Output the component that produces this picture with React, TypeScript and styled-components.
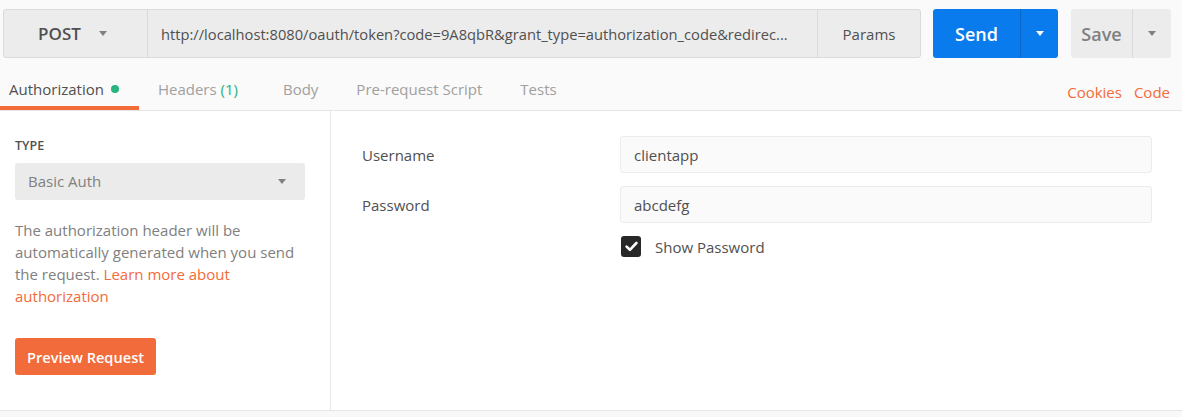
import React from "react";
import styled, { createGlobalStyle } from "styled-components";

const GlobalStyle = createGlobalStyle`
  html, body {
    margin: 0;
    padding: 0;
    background: #fafafa;
    font-family: "Open Sans", "Noto Sans", sans-serif;
    color: #505050;
  }
  * { box-sizing: border-box; }
`;

const Page = styled.div`
  width: 1182px;
  height: 417px;
  background: #fafafa;
  overflow: hidden;
`;

const RequestRow = styled.div`
  display: flex;
  align-items: stretch;
  height: 58px;
  padding: 9px 11px 0 3px;
`;

const UrlGroup = styled.div`
  display: flex;
  flex: 1;
  height: 49px;
  border: 1px solid #dadada;
  border-radius: 3px;
  background: #ececec;
  overflow: hidden;
`;

const Method = styled.div`
  width: 144px;
  display: flex;
  align-items: center;
  justify-content: center;
  gap: 18px;
  font-size: 17px;
  font-weight: 600;
  color: #505050;
  border-right: 1px solid #dadada;
  padding-right: 6px;
`;

const Caret = styled.span<{ $color?: string }>`
  display: inline-block;
  width: 0;
  height: 0;
  border-left: 4.5px solid transparent;
  border-right: 4.5px solid transparent;
  border-top: 5.5px solid ${(p) => p.$color ?? "#808080"};
`;

const UrlText = styled.div`
  flex: 1;
  display: flex;
  align-items: center;
  padding-left: 13px;
  font-size: 14.7px;
  color: #505050;
  white-space: nowrap;
  overflow: hidden;
  border-right: 1px solid #dadada;
`;

const Params = styled.div`
  width: 102px;
  display: flex;
  align-items: center;
  justify-content: center;
  font-size: 15px;
  color: #505050;
`;

const SplitButton = styled.div<{ $bg: string; $divider: string; $width: number; $main: number; $gap: number }>`
  display: flex;
  width: ${(p) => p.$width}px;
  height: 49px;
  margin-left: ${(p) => p.$gap}px;
  background: ${(p) => p.$bg};
  border-radius: 3px;
  overflow: hidden;

  & > div:first-child {
    width: ${(p) => p.$main}px;
    border-right: 1px solid ${(p) => p.$divider};
  }
`;

const SplitMain = styled.div<{ $color: string }>`
  display: flex;
  align-items: center;
  justify-content: center;
  font-size: 18px;
  font-weight: 600;
  color: ${(p) => p.$color};
`;

const SplitArrow = styled.div`
  flex: 1;
  display: flex;
  align-items: center;
  justify-content: center;
`;

const TabBar = styled.div`
  display: flex;
  align-items: stretch;
  height: 53px;
  border-bottom: 1px solid #e6e6e6;
`;

const Tab = styled.div<{ $active?: boolean; $right?: number }>`
  display: flex;
  align-items: center;
  gap: 7px;
  padding: 13px ${(p) => p.$right ?? 19}px 0 19px;
  font-size: 15px;
  color: ${(p) => (p.$active ? "#505050" : "#a0a0a0")};
  border-bottom: 4px solid ${(p) => (p.$active ? "#f26b3a" : "transparent")};
  &:first-child {
    padding-left: 9px;
  }
`;

const Dot = styled.span`
  width: 8px;
  height: 8px;
  border-radius: 50%;
  background: #26b47f;
`;

const Count = styled.span`
  color: #26b47f;
`;

const TabLinks = styled.div`
  margin-left: auto;
  display: flex;
  align-items: center;
  gap: 12px;
  padding: 15px 12px 0 0;
`;

const OrangeLink = styled.a`
  color: #f26b3a;
  font-size: 15px;
  text-decoration: none;
`;

const Body = styled.div`
  display: flex;
  height: 300px;
  background: #fff;
  border-bottom: 1px solid #e6e6e6;
`;

const Sidebar = styled.div`
  width: 331px;
  border-right: 1px solid #e6e6e6;
  padding: 26px 25px 0 15px;
`;

const SectionLabel = styled.div`
  font-size: 12.5px;
  font-weight: 600;
  color: #505050;
  line-height: 18px;
`;

const Select = styled.div`
  margin-top: 8px;
  height: 37px;
  display: flex;
  align-items: center;
  justify-content: space-between;
  padding: 0 19px 1px 13px;
  background: #ebebeb;
  border-radius: 3px;
  font-size: 15px;
  color: #808080;
`;

const Description = styled.p`
  margin: 19px 0 0;
  font-size: 15px;
  line-height: 22px;
  color: #808080;
`;

const PrimaryButton = styled.button`
  margin-top: 31px;
  height: 37px;
  padding: 0 12px;
  border: none;
  border-radius: 3px;
  background: #f26b3a;
  color: #fff;
  font-family: inherit;
  font-size: 14.6px;
  font-weight: 600;
`;

const Form = styled.div`
  flex: 1;
  padding: 25px 30px 0 31px;
`;

const FieldRow = styled.div`
  display: flex;
  align-items: center;
  margin-bottom: 13px;
`;

const FieldLabel = styled.div`
  width: 258px;
  font-size: 15px;
  color: #505050;
`;

const Input = styled.div`
  flex: 1;
  height: 37px;
  display: flex;
  align-items: center;
  padding: 0 13px;
  background: #fafafa;
  border: 1px solid #ececec;
  border-radius: 3px;
  font-size: 15px;
  color: #505050;
`;

const CheckRow = styled.div`
  display: flex;
  align-items: center;
  gap: 14px;
  margin-left: 259px;
  margin-top: 1px;
  font-size: 15px;
  color: #505050;
`;

const CheckBox = styled.span`
  width: 20px;
  height: 21px;
  border-radius: 3px;
  background: #282828;
  display: flex;
  align-items: center;
  justify-content: center;
`;

const Footer = styled.div`
  height: 6px;
  background: #f8f8f8;
`;

export default function App() {
  const tabs = [
    { title: "Headers", count: "(1)", right: 26 },
    { title: "Body" },
    { title: "Pre-request Script" },
    { title: "Tests" },
  ];

  return (
    <Page>
      <GlobalStyle />
      <RequestRow>
        <UrlGroup>
          <Method>
            POST
            <Caret />
          </Method>
          <UrlText>
            http://localhost:8080/oauth/token?code=9A8qbR&amp;grant_type=authorization_code&amp;redirec...
          </UrlText>
          <Params>Params</Params>
        </UrlGroup>
        <SplitButton $bg="#097bed" $divider="#0867c7" $width={125} $main={88} $gap={12}>
          <SplitMain $color="#fff">Send</SplitMain>
          <SplitArrow>
            <Caret $color="#fff" />
          </SplitArrow>
        </SplitButton>
        <SplitButton $bg="#ececec" $divider="#dadada" $width={100} $main={62} $gap={13}>
          <SplitMain $color="#808080">Save</SplitMain>
          <SplitArrow>
            <Caret $color="#808080" />
          </SplitArrow>
        </SplitButton>
      </RequestRow>

      <TabBar>
        <Tab $active $right={20}>
          Authorization
          <Dot />
        </Tab>
        {tabs.map((t) => (
          <Tab key={t.title} $right={t.right}>
            <span>
              {t.title} {t.count && <Count>{t.count}</Count>}
            </span>
          </Tab>
        ))}
        <TabLinks>
          <OrangeLink>Cookies</OrangeLink>
          <OrangeLink>Code</OrangeLink>
        </TabLinks>
      </TabBar>

      <Body>
        <Sidebar>
          <SectionLabel>TYPE</SectionLabel>
          <Select>
            Basic Auth
            <Caret />
          </Select>
          <Description>
            The authorization header will be automatically generated when you send the
            request. <OrangeLink>Learn more about authorization</OrangeLink>
          </Description>
          <PrimaryButton>Preview Request</PrimaryButton>
        </Sidebar>
        <Form>
          <FieldRow>
            <FieldLabel>Username</FieldLabel>
            <Input>clientapp</Input>
          </FieldRow>
          <FieldRow>
            <FieldLabel>Password</FieldLabel>
            <Input>abcdefg</Input>
          </FieldRow>
          <CheckRow>
            <CheckBox>
              <svg width="13" height="11" viewBox="0 0 13 11">
                <path d="M1.6 5.6 L4.9 8.8 L11.4 2" stroke="#fff" strokeWidth="2.6" fill="none" strokeLinecap="round" strokeLinejoin="round" />
              </svg>
            </CheckBox>
            Show Password
          </CheckRow>
        </Form>
      </Body>
      <Footer />
    </Page>
  );
}
